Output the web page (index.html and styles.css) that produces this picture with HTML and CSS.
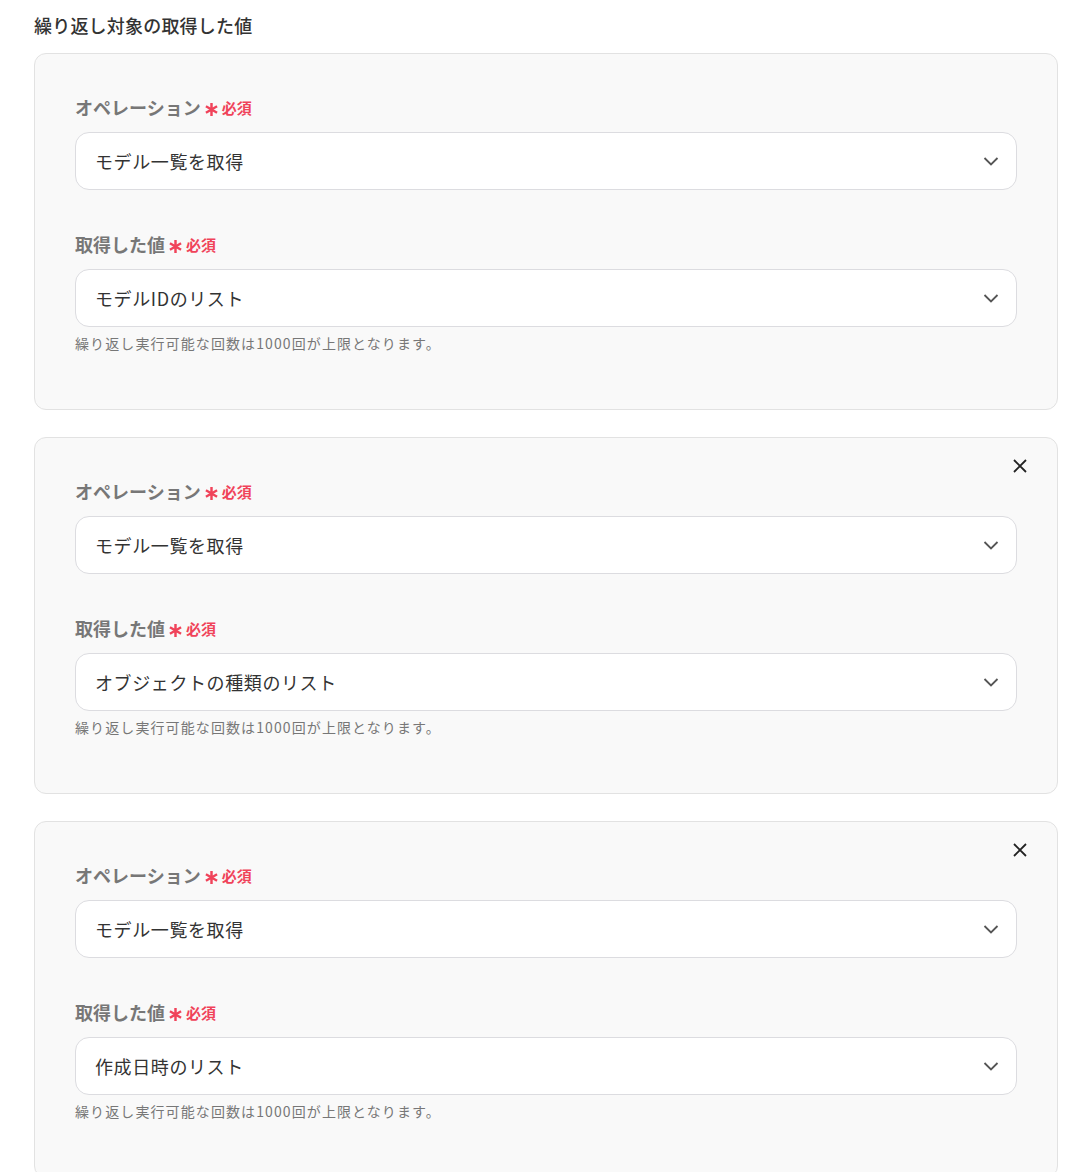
FILE: index.html
```html
<!DOCTYPE html>
<html lang="ja">
<head>
    <meta charset="UTF-8">
    <meta name="viewport" content="width=device-width, initial-scale=1.0">
    <title>繰り返し設定</title>
    <link rel="stylesheet" href="styles.css">
</head>
<body>

    <div class="page">
        <h3 class="section-title">繰り返し対象の取得した値</h3>

        <!-- 1件目: 削除ボタンなし -->
        <div class="loop-card">
            <div class="field">
                <label class="field-label">オペレーション<span class="req"><svg class="req-mark" viewBox="0 0 14 14"><path d="M7 1v12M1.8 4l10.4 6M12.2 4L1.8 10"/></svg>必須</span></label>
                <div class="select">
                    <span>モデル一覧を取得</span>
                    <svg class="chevron" viewBox="0 0 20 20"><path d="M3.5 7l6.5 6.5 6.5-6.5"/></svg>
                </div>
            </div>
            <div class="field">
                <label class="field-label">取得した値<span class="req"><svg class="req-mark" viewBox="0 0 14 14"><path d="M7 1v12M1.8 4l10.4 6M12.2 4L1.8 10"/></svg>必須</span></label>
                <div class="select">
                    <span>モデルIDのリスト</span>
                    <svg class="chevron" viewBox="0 0 20 20"><path d="M3.5 7l6.5 6.5 6.5-6.5"/></svg>
                </div>
                <p class="help">繰り返し実行可能な回数は1000回が上限となります。</p>
            </div>
        </div>

        <div class="loop-card">
            <button class="remove" type="button"><svg viewBox="0 0 16 16"><path d="M2 2l12 12M14 2L2 14"/></svg></button>
            <div class="field">
                <label class="field-label">オペレーション<span class="req"><svg class="req-mark" viewBox="0 0 14 14"><path d="M7 1v12M1.8 4l10.4 6M12.2 4L1.8 10"/></svg>必須</span></label>
                <div class="select">
                    <span>モデル一覧を取得</span>
                    <svg class="chevron" viewBox="0 0 20 20"><path d="M3.5 7l6.5 6.5 6.5-6.5"/></svg>
                </div>
            </div>
            <div class="field">
                <label class="field-label">取得した値<span class="req"><svg class="req-mark" viewBox="0 0 14 14"><path d="M7 1v12M1.8 4l10.4 6M12.2 4L1.8 10"/></svg>必須</span></label>
                <div class="select">
                    <span>オブジェクトの種類のリスト</span>
                    <svg class="chevron" viewBox="0 0 20 20"><path d="M3.5 7l6.5 6.5 6.5-6.5"/></svg>
                </div>
                <p class="help">繰り返し実行可能な回数は1000回が上限となります。</p>
            </div>
        </div>

        <div class="loop-card">
            <button class="remove" type="button"><svg viewBox="0 0 16 16"><path d="M2 2l12 12M14 2L2 14"/></svg></button>
            <div class="field">
                <label class="field-label">オペレーション<span class="req"><svg class="req-mark" viewBox="0 0 14 14"><path d="M7 1v12M1.8 4l10.4 6M12.2 4L1.8 10"/></svg>必須</span></label>
                <div class="select">
                    <span>モデル一覧を取得</span>
                    <svg class="chevron" viewBox="0 0 20 20"><path d="M3.5 7l6.5 6.5 6.5-6.5"/></svg>
                </div>
            </div>
            <div class="field">
                <label class="field-label">取得した値<span class="req"><svg class="req-mark" viewBox="0 0 14 14"><path d="M7 1v12M1.8 4l10.4 6M12.2 4L1.8 10"/></svg>必須</span></label>
                <div class="select">
                    <span>作成日時のリスト</span>
                    <svg class="chevron" viewBox="0 0 20 20"><path d="M3.5 7l6.5 6.5 6.5-6.5"/></svg>
                </div>
                <p class="help">繰り返し実行可能な回数は1000回が上限となります。</p>
            </div>
        </div>
    </div>

</body>
</html>
```

FILE: styles.css
```css
body {
    margin: 0;
    background: #fff;
    font-family: "Noto Sans CJK JP", "Noto Sans", sans-serif;
    color: #333;
}

.page {
    padding: 11px 32px 0 34px;
    display: flex;
    flex-direction: column;
    gap: 27px;
}

.section-title {
    margin: 0 0 -13px;
    font-size: 18px;
    line-height: 28px;
    font-weight: 500;
    letter-spacing: 0.2px;
    color: #333;
}

.loop-card {
    position: relative;
    background: #f9f9f9;
    border: 1px solid #e2e2e2;
    border-radius: 12px;
    padding: 39px 40px 56px;
    display: flex;
    flex-direction: column;
    gap: 40px;
}

.remove {
    position: absolute;
    top: 20px;
    right: 29px;
    width: 16px;
    height: 16px;
    padding: 0;
    border: none;
    background: none;
    cursor: pointer;
}

.remove svg {
    width: 16px;
    height: 16px;
    display: block;
    stroke: #222;
    stroke-width: 1.8;
    fill: none;
}

.field-label {
    display: flex;
    align-items: center;
    height: 28px;
    margin-bottom: 11px;
    font-size: 18px;
    font-weight: 700;
    color: #777;
}

.req {
    display: inline-flex;
    align-items: center;
    margin-left: 3px;
    font-size: 15px;
    font-weight: 700;
    color: #f0435a;
}

.req-mark {
    width: 15px;
    height: 15px;
    margin-right: 3px;
    margin-top: 4px;
    stroke: #f0435a;
    stroke-width: 2.3;
    fill: none;
}

.select {
    height: 56px;
    background: #fff;
    border: 1px solid #dcdce0;
    border-radius: 14px;
    padding: 0 15px 0 19px;
    display: flex;
    align-items: center;
    justify-content: space-between;
    font-size: 18px;
    letter-spacing: 0.6px;
    color: #333;
}

.chevron {
    width: 20px;
    height: 20px;
    stroke: #555;
    stroke-width: 1.8;
    fill: none;
}

.help {
    margin: 6px 0 0;
    font-size: 14px;
    line-height: 20px;
    letter-spacing: 1.1px;
    color: #777;
}
```
